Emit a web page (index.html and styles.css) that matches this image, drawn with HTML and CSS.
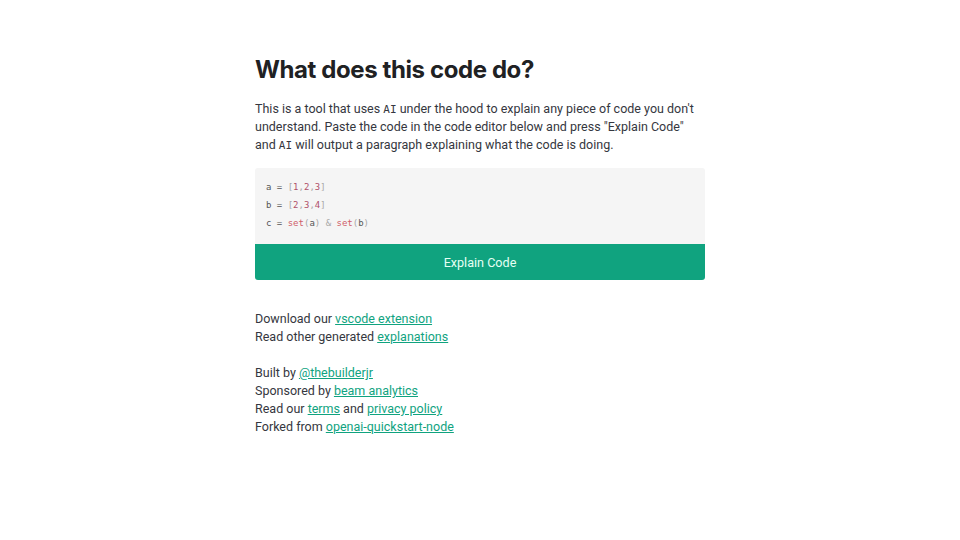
FILE: index.html
```html
<!DOCTYPE html>
<html>
<head>
<meta charset="utf-8">
<link rel="stylesheet" href="styles.css">
</head>
<body>
<main class="container">
  <h1 class="title">What does this code do?</h1>
  <p class="intro">This is a tool that uses <code class="ai">AI</code> under the hood to explain any piece of code you don't understand. Paste the code in the code editor below and press "Explain Code" and <code class="ai">AI</code> will output a paragraph explaining what the code is doing.</p>
  <div class="editor">
    <div class="line">a = <span class="p">[</span><span class="n">1</span><span class="p">,</span><span class="n">2</span><span class="p">,</span><span class="n">3</span><span class="p">]</span></div>
    <div class="line">b = <span class="p">[</span><span class="n">2</span><span class="p">,</span><span class="n">3</span><span class="p">,</span><span class="n">4</span><span class="p">]</span></div>
    <div class="line">c = <span class="f">set</span><span class="p">(</span>a<span class="p">)</span> <span class="p">&amp;</span> <span class="f">set</span><span class="p">(</span>b<span class="p">)</span></div>
  </div>
  <button class="btn">Explain Code</button>
  <div class="links">
    <div>Download our <a href="#">vscode extension</a></div>
    <div>Read other generated <a href="#">explanations</a></div>
    <div class="spacer"></div>
    <div>Built by <a href="#">@thebuilderjr</a></div>
    <div>Sponsored by <a href="#">beam analytics</a></div>
    <div>Read our <a href="#">terms</a> and <a href="#">privacy policy</a></div>
    <div>Forked from <a href="#">openai-quickstart-node</a></div>
  </div>
</main>
</body>
</html>
```
FILE: styles.css
```css
html, body {
  margin: 0;
  padding: 0;
  background: #ffffff;
}
body {
  font-family: Roboto, "Noto Sans", sans-serif;
  color: #353740;
  font-size: 12.5px;
}
.container {
  width: 450px;
  margin: 0 auto;
  padding-top: 55px;
}
.title {
  margin: 0;
  font-family: Inter, "Noto Sans", sans-serif;
  font-size: 24px;
  font-weight: 700;
  line-height: 30px;
  color: #202123;
  letter-spacing: -0.4px;
}
.intro {
  margin: 15px 0 14px;
  font-size: 12.5px;
  line-height: 18px;
  color: #353740;
}
.ai {
  font-family: "DejaVu Sans Mono", monospace;
  font-size: 11px;
  line-height: 1;
}
.editor {
  background: #f5f5f5;
  padding: 10px 11px 12px;
  font-family: "DejaVu Sans Mono", monospace;
  font-size: 9px;
  color: #555;
  line-height: 18px;
  border-radius: 3px 3px 0 0;
}
.editor .p { color: #a8a8a8; }
.editor .n { color: #b0506a; }
.editor .f { color: #d0606a; }
.btn {
  display: block;
  width: 100%;
  height: 36px;
  border: none;
  background: #10a37f;
  color: #e6fff4;
  font-family: Roboto, "Noto Sans", sans-serif;
  font-size: 12.6px;
  padding: 0;
  margin: 0;
  border-radius: 0 0 3px 3px;
}
.links {
  margin-top: 30px;
  line-height: 18px;
  font-size: 12.5px;
}
.spacer { height: 18px; }
.links a {
  color: #10a37f;
  text-decoration: underline;
}
```
